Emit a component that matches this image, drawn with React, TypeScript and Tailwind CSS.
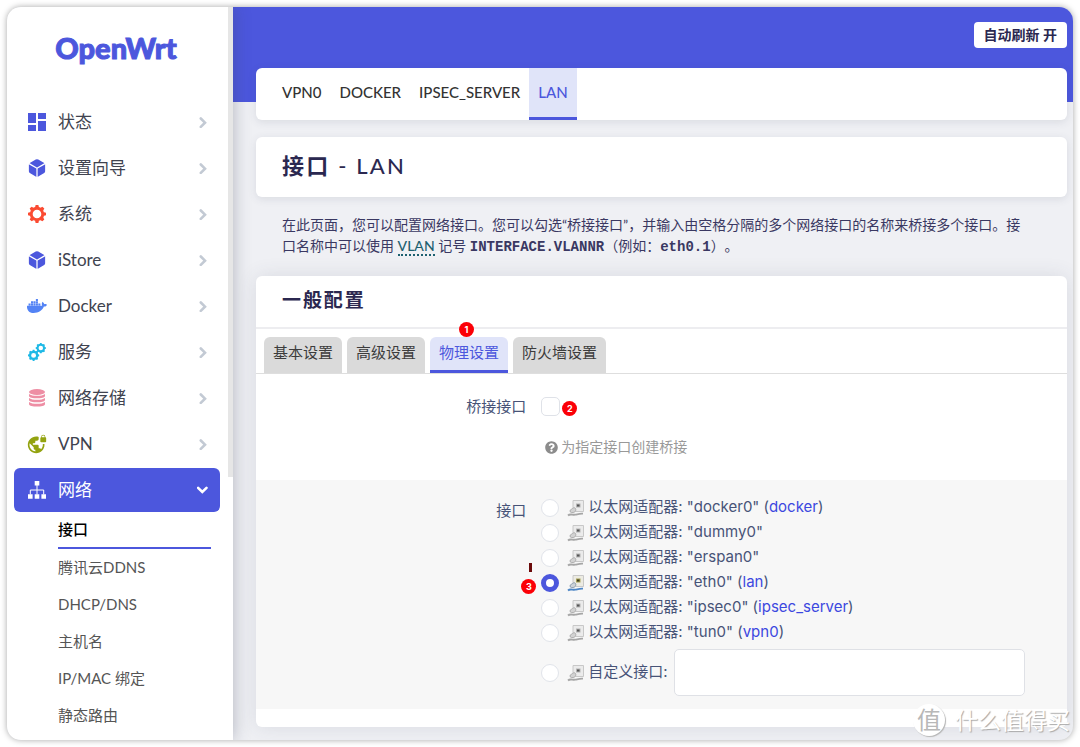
import type { ReactNode } from "react";
import { FaDocker, FaQuestionCircle } from "react-icons/fa";
import { IoCube } from "react-icons/io5";
import { MdDashboard, MdVpnLock } from "react-icons/md";

interface NavItem {
    label: string;
    icon: ReactNode;
}

interface Adapter {
    name: string;
    network?: string;
}

const navItems: NavItem[] = [
    { label: "状态", icon: <MdDashboard className="size-6 text-[#4c57dd]" /> },
    { label: "设置向导", icon: <IoCube className="size-5 text-[#4c57dd]" /> },
    { label: "系统", icon: <GearIcon /> },
    { label: "iStore", icon: <IoCube className="size-5 text-[#4c57dd]" /> },
    { label: "Docker", icon: <FaDocker className="size-5 text-[#5383f5]" /> },
    { label: "服务", icon: <GearsIcon /> },
    { label: "网络存储", icon: <StorageIcon /> },
    { label: "VPN", icon: <MdVpnLock className="size-5 text-[#93a310]" /> },
];

const subItems = ["接口", "腾讯云DDNS", "DHCP/DNS", "主机名", "IP/MAC 绑定", "静态路由"];
const networks = ["VPN0", "DOCKER", "IPSEC_SERVER", "LAN"];
const settingTabs = ["基本设置", "高级设置", "物理设置", "防火墙设置"];

const adapters: Adapter[] = [
    { name: "docker0", network: "docker" },
    { name: "dummy0" },
    { name: "erspan0" },
    { name: "eth0", network: "lan" },
    { name: "ipsec0", network: "ipsec_server" },
    { name: "tun0", network: "vpn0" },
];

export default function App() {
    return <div className="relative bg-white p-[7px] font-['Lato','Noto_Sans_CJK_SC',sans-serif]">
        <div className="relative flex overflow-hidden rounded-[14px] bg-[#eff0f4] shadow-[0_0_6px_rgba(0,0,0,0.35)]">
            <Sidebar />
            <Main />
        </div>
        <Watermark />
    </div>
}

function Sidebar() {
    return <aside className="relative z-10 w-[226px] shrink-0 bg-white shadow-[0_0_16px_rgba(60,65,90,0.35)]">
        <div className="absolute top-0 right-0 h-[470px] w-[5px] bg-[#e6e6e6]" />
        <a href="#" className="block pt-[21px] pr-2 text-center text-[29px] leading-10 font-black text-[#4c57dd] [-webkit-text-stroke:1px_#4c57dd]">OpenWrt</a>
        <nav className="mt-8 pr-[13px] pl-[7px]">
            <ul className="flex flex-col gap-0.5">
                {navItems.map((item) => <li key={item.label}>
                    <a href="#" className="flex h-11 items-center px-[11px] text-[17px] text-[#40434f]">
                        <span className="flex w-6 justify-center">{item.icon}</span>
                        <span className="ml-[9px] flex-1">{item.label}</span>
                        <Chevron className="text-[#c3cad4]" />
                    </a>
                </li>)}
                <li>
                    <a href="#" className="flex h-11 items-center rounded-md bg-[#4c57dd] px-[11px] text-[17px] text-white">
                        <span className="flex w-6 justify-center"><SitemapIcon /></span>
                        <span className="ml-[9px] flex-1">网络</span>
                        <Chevron className="rotate-90" />
                    </a>
                </li>
            </ul>
            <ul className="pr-[9px] pl-11">
                {subItems.map((label, i) => <li key={label}>
                    <a href="#" className={`flex h-[37px] items-center text-[15px] ${i === 0 ? "border-b-2 border-[#4c57dd] font-medium text-black" : "text-[#555]"}`}>{label}</a>
                </li>)}
            </ul>
        </nav>
    </aside>
}

function Main() {
    return <main className="min-w-0 flex-1">
        <header className="flex h-[95px] items-start justify-end bg-[#4c57dd] pt-[15px] pr-[6px]">
            <button className="h-[26px] rounded-sm bg-white px-[10px] text-[14px] leading-5 font-bold text-[#2b2850]">自动刷新 开</button>
        </header>
        <div className="-mt-[34px] pr-[6px] pb-[13px] pl-[23px]">
            <div className="flex h-[52px] rounded-md bg-white pl-[17px] shadow-[0_2px_8px_rgba(60,65,90,0.12)]">
                {networks.map((name) => <a
                    key={name}
                    href="#"
                    className={`flex items-center px-[9px] text-[15px] font-medium ${name === "LAN" ? "border-b-3 border-[#4c57dd] bg-[#e0e4f9] text-[#4c57dd]" : "border-b-3 border-transparent text-[#333]"}`}
                >{name}</a>)}
            </div>

            <h2 className="mt-[17px] flex h-[60px] items-center rounded-md bg-white px-[26px] pb-1 text-[22px] font-bold tracking-widest text-[#2b2850] shadow-[0_2px_8px_rgba(60,65,90,0.12)]">
                接口<span className="font-medium">&nbsp;- LAN</span>
            </h2>

            <p className="mt-[17px] pr-3 pl-[26px] text-[14px] leading-[21px] text-[#3a3862] [text-spacing-trim:space-all]">
                在此页面，您可以配置网络接口。您可以勾选“桥接接口”，并输入由空格分隔的多个网络接口的名称来桥接多个接口。接<br />
                口名称中可以使用 <abbr title="Virtual Local Area Network" className="border-b-2 border-dotted border-[#1d6070] font-medium text-[#1d6070] no-underline">VLAN</abbr> 记号 <Code>INTERFACE.VLANNR</Code>（例如：<Code>eth0.1</Code>）。
            </p>

            <section className="mt-[18px] rounded-md bg-white pb-[18px] shadow-[0_0_20px_rgba(60,65,90,0.12)]">
                <h3 className="flex h-[53px] items-center border-b-2 border-[#ededf0] px-[26px] pb-0.5 text-[19px] font-bold tracking-widest text-[#2b2850]">一般配置</h3>
                <div className="flex gap-[5px] border-b border-[#dedede] px-2 pt-2">
                    {settingTabs.map((label) => <SettingTab key={label} label={label} active={label === "物理设置"} />)}
                </div>
                <BridgeRow />
                <AdapterRow />
            </section>
        </div>
    </main>
}

function Code({ children }: { children: ReactNode }) {
    return <code className="font-['Liberation_Mono',monospace] text-[14px] font-bold">{children}</code>
}

function SettingTab({ label, active }: { label: string, active: boolean }) {
    return <button className={`relative h-9 rounded-t-md border-b-3 px-[9px] pb-0.5 text-[15px] ${active ? "border-[#4c57dd] bg-[#e0e4f9] text-[#4c57dd]" : "border-[#dadada] bg-[#dadada] text-[#3c3c3c]"}`}>
        {label}
        {active && <Badge className="absolute -top-[15px] left-[29px]">1</Badge>}
    </button>
}

function BridgeRow() {
    return <div className="flex h-[106px] pt-5 text-[15px] text-[#475377]">
        <label htmlFor="bridge" className="w-1/3 text-right leading-6">桥接接口</label>
        <div className="flex-1 pl-[15px]">
            <div className="relative flex h-6 items-center">
                <input id="bridge" type="checkbox" className="size-[19px] appearance-none rounded-[5px] border border-[#dfe2e8] bg-white" />
                <Badge className="absolute top-[7px] left-[21px]">2</Badge>
            </div>
            <div className="mt-[17px] flex items-center gap-[3px] pl-1 text-[14px] leading-6 text-[#999]">
                <FaQuestionCircle className="size-[13px] text-[#8c8c8c]" />为指定接口创建桥接
            </div>
        </div>
    </div>
}

function AdapterRow() {
    return <div className="flex bg-[#f7f7f7] pt-[15px] pb-[13px] font-['Inter','Noto_Sans_CJK_SC',sans-serif] text-[15px] text-[#475377]">
        <div className="w-1/3 pt-1 text-right leading-6">接口</div>
        <div role="radiogroup" aria-label="接口" className="flex-1 pr-[42px] pl-[15px]">
            {adapters.map(({ name, network }) => {
                const checked = name === "eth0";
                return <div key={name} className="relative flex h-[25px] items-center">
                    {checked && <div className="absolute -left-3 -top-[7px] h-[9px] w-[3px] bg-[#6b0a0a]" />}
                    {checked && <Badge className="absolute -left-5 top-[9px]">3</Badge>}
                    <Radio id={name} checked={checked} />
                    <label htmlFor={name} className="flex items-center">
                        <EthernetIcon active={checked} />
                        <span className="ml-[3px]">以太网适配器: "{name}"{network && <> (<a href="#" className="text-[#3c48e0]">{network}</a>)</>}</span>
                    </label>
                </div>
            })}
            <div className="mt-1 flex items-center">
                <Radio id="custom" checked={false} />
                <label htmlFor="custom" className="flex items-center">
                    <EthernetIcon active={false} />
                    <span className="ml-[3px]">自定义接口:</span>
                </label>
                <input type="text" aria-label="自定义接口" className="ml-1.5 h-[47px] min-w-0 flex-1 rounded-[5px] border border-[#dfe1e6] bg-white px-3" />
            </div>
        </div>
    </div>
}

function Radio({ id, checked }: { id: string, checked: boolean }) {
    return <input
        id={id}
        type="radio"
        name="ifname"
        defaultChecked={checked}
        className="mr-2 size-[18px] shrink-0 appearance-none rounded-full border border-[#e1e4ea] bg-white checked:border-5 checked:border-[#4c57dd]"
    />
}

function Badge({ children, className }: { children: ReactNode, className: string }) {
    return <span className={`flex size-[15px] items-center justify-center rounded-full bg-[#fb0007] font-['Inter',sans-serif] text-[9px] leading-none font-bold text-white ${className}`}>{children}</span>
}

function Watermark() {
    return <div className="absolute right-[10px] bottom-[11px] flex items-center gap-[10px] text-[23px] leading-8 text-white [text-shadow:1px_1px_1px_#a8a8a8]">
        <span className="flex size-8 items-center justify-center rounded-full bg-white text-[24px] text-[#b8b8b8] shadow-[1px_1px_1px_#b5b5b5] [text-shadow:none]">值</span>
        什么值得买
    </div>
}

function Chevron({ className }: { className: string }) {
    return <svg viewBox="0 0 12 12" className={`size-3 ${className}`} fill="none" stroke="currentColor" strokeWidth="2.6" strokeLinecap="round">
        <path d="M3.8 2.500 8 6.700l-4.200 4.200" />
    </svg>
}

function Gear({ cx, cy, r, weight = 3.2 }: { cx: number, cy: number, r: number, weight?: number }) {
    return <g transform={`translate(${cx} ${cy}) scale(${r / 10})`}>
        <circle r="6.4" fill="none" stroke="currentColor" strokeWidth={weight} />
        {[0, 45, 90, 135, 180, 225, 270, 315].map((a) => <path key={a} d="M-2.3-7h4.6L1.5-10h-3z" fill="currentColor" transform={`rotate(${a})`} />)}
    </g>
}

function GearIcon() {
    return <svg viewBox="0 0 20 20" className="size-[18px] text-[#fb4b32]"><Gear cx={10} cy={10} r={10} /></svg>
}

function GearsIcon() {
    return <svg viewBox="0 0 18 18" className="size-[18px] text-[#1fb9e6]">
        <Gear cx={5.6} cy={12.4} r={5.6} weight={4} />
        <Gear cx={12.8} cy={5.1} r={5.1} weight={4} />
    </svg>
}

function StorageIcon() {
    return <svg viewBox="0 0 16 18" className="h-[18px] w-4" fill="#ee8ea4">
        <ellipse cx="8" cy="3" rx="8" ry="3" />
        <path d="M0 4.9c3 2.6 13 2.6 16 0v2c0 3.2-16 3.2-16 0z" />
        <path d="M0 8.9c3 2.6 13 2.6 16 0v2c0 3.2-16 3.2-16 0z" />
        <path d="M0 12.9c3 2.6 13 2.6 16 0v2c0 3.6-16 3.6-16 0z" />
    </svg>
}

function SitemapIcon() {
    return <svg viewBox="0 0 18 18" className="size-[18px]" fill="currentColor">
        <path d="M6.7 0h4.6v4.6H6.7zM0 13.2h4.6v4.6H0zM6.7 13.2h4.6v4.6H6.7zM13.4 13.2H18v4.6h-4.6z" />
        <path d="M9 4v9.5M2.3 13.5V9h13.4v4.5" fill="none" stroke="currentColor" />
    </svg>
}

function EthernetIcon({ active }: { active: boolean }) {
    return <svg viewBox="0 0 18 18" className="size-[18px]" fill="none">
        <path d="M6 1.5h10.5v11H6z" fill={active ? "#ecebe2" : "#ebebeb"} stroke="#c8c8c8" />
        <path d="M9 4.500h4.500v4H9z" fill={active ? "#a8a25a" : "#b4b4b4"} />
        <path d="M10 5.500h2.500v2H10z" fill={active ? "#3c3c20" : "#555"} />
        <path d="M3 12c0-1.500 1.500-1.500 2.500-2.500S8 8.500 8.500 9.500s.5 2.500-1 3.500-4.500 1-4.500-1z" fill={active ? "#cdd3d8" : "#d2d2d2"} stroke={active ? "#8c9dae" : "#adadad"} />
        <path d="M1 16.500c2-2 4-.5 7-.8 2.500-.3 3.500-1.200 8-1" stroke={active ? "#4d86c6" : "#a6a6a6"} strokeWidth="1.8" />
    </svg>
}
